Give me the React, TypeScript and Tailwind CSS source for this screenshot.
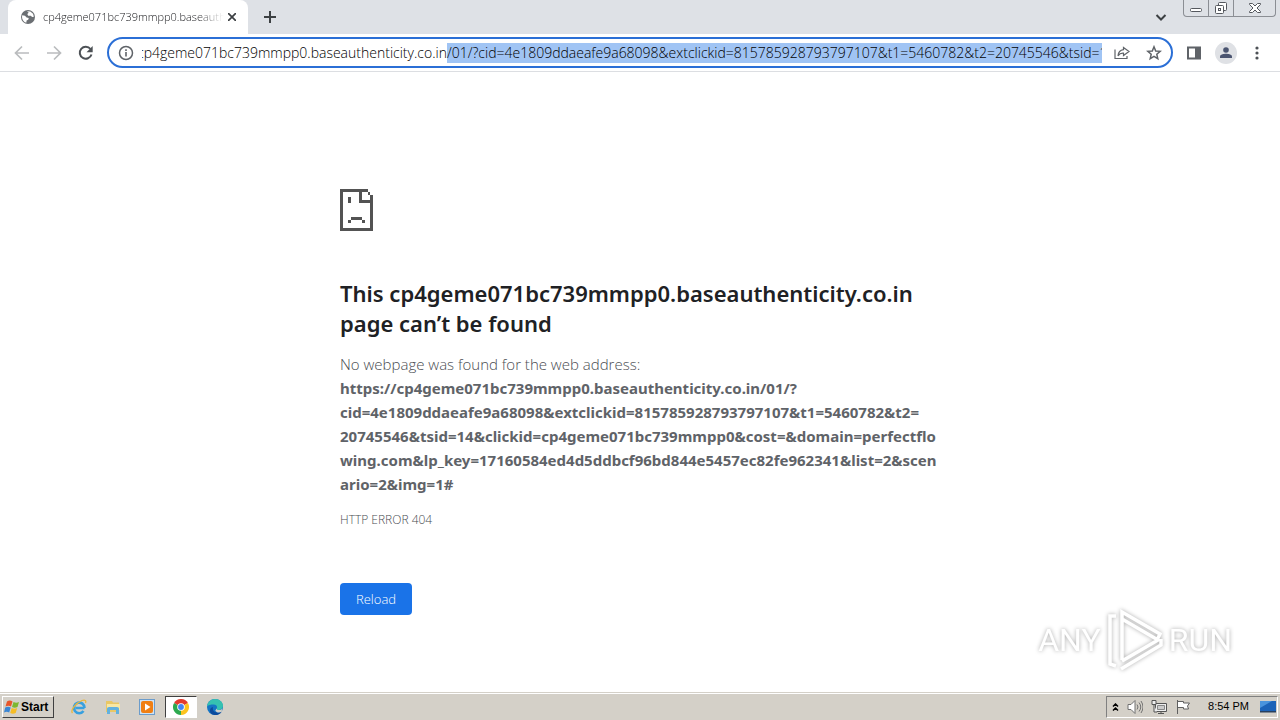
import React, { useEffect, useRef } from "react";

const HOST = "cp4geme071bc739mmpp0.baseauthenticity.co.in";
const PATH = "/01/?cid=4e1809ddaeafe9a68098&extclickid=815785928793797107&t1=5460782&t2=20745546&tsid=14&clickid=cp4geme071bc739mmpp0";

const addressLines = [
  "https://cp4geme071bc739mmpp0.baseauthenticity.co.in/01/?",
  "cid=4e1809ddaeafe9a68098&extclickid=815785928793797107&t1=5460782&t2=",
  "20745546&tsid=14&clickid=cp4geme071bc739mmpp0&cost=&domain=perfectflo",
  "wing.com&lp_key=17160584ed4d5ddbcf96bd844e5457ec82fe962341&list=2&scen",
  "ario=2&img=1#",
];

/* Tab strip icons */
function GlobeIcon() {
  return (
    <svg className="h-4 w-4 shrink-0" viewBox="0 0 16 16">
      <circle cx="8" cy="8" r="7" fill="#6b6f73" />
      <path d="M2.2 6.2 5 6.8l1.6 1.7 2.2.5-.6 1.8-1.6.6-.3 2.4C3.600 13 2 10.500 2 8zM7 2.200l3.300.2 2.700 2.300.9 3-1.700.4-1.500-1.400-2.500.1-.9-1.700 1.400-1.300z" fill="#fff" />
    </svg>
  );
}

function CaptionButtons() {
  return (
    <div className="flex h-[17px] w-[93px] self-start rounded-b border border-t-0 border-[#8b8e94] text-[#55585e]">
      <button aria-label="Minimize" className="flex w-[25px] items-center justify-center border-r border-[#8b8e94]">
        <svg className="h-4 w-4" viewBox="0 0 16 16" fill="#fff" stroke="currentColor"><rect x="2.500" y="8.500" width="11" height="3" rx="1" /></svg>
      </button>
      <button aria-label="Restore" className="flex w-[25px] items-center justify-center border-r border-[#8b8e94]">
        <svg className="h-4 w-4" viewBox="0 0 16 16" fill="#fff" stroke="currentColor">
          <rect x="5.500" y="2.500" width="8" height="8" rx="1" />
          <rect x="2.500" y="5.500" width="8" height="8" rx="1" />
          <rect x="5.500" y="8.500" width="2" height="2" />
        </svg>
      </button>
      <button aria-label="Close" className="flex flex-1 items-center justify-center">
        <svg className="h-4 w-4" viewBox="0 0 16 16" fill="#fff" stroke="currentColor">
          <path d="M2.500 3.500h3L8 6l2.500-2.500h3v1L10 8l3.500 3.500v1h-3L8 10l-2.500 2.500h-3v-1L6 8 2.500 4.500z" />
        </svg>
      </button>
    </div>
  );
}

function TabStrip() {
  return (
    <div className="flex h-[34px] shrink-0 bg-[#dee1e6] pl-2">
      <div className="flex w-60 items-center rounded-t-lg bg-white pl-3 pr-2">
        <GlobeIcon />
        <span className="ml-[7px] flex-1 overflow-hidden whitespace-nowrap text-[11px] text-[#202124] [mask-image:linear-gradient(to_right,#000_85%,transparent)]">{HOST}</span>
        <button aria-label="Close tab" className="flex h-4 w-4 items-center justify-center">
          <svg className="h-2 w-2" viewBox="0 0 8 8" stroke="#3c4043" strokeWidth="1.700"><path d="M0 0l8 8M8 0L0 8" /></svg>
        </button>
      </div>
      <button aria-label="New tab" className="ml-2 flex w-7 items-center justify-center">
        <svg className="h-3 w-3" viewBox="0 0 12 12" stroke="#3c4043" strokeWidth="2"><path d="M6 0v12M0 6h12" /></svg>
      </button>
      <div className="ml-auto flex items-center gap-4 pr-1">
        <button aria-label="Search tabs">
          <svg className="h-3 w-3" viewBox="0 0 12 12" fill="none" stroke="#3c4043" strokeWidth="2"><path d="M1.500 4 6 8.500 10.500 4" /></svg>
        </button>
        <CaptionButtons />
      </div>
    </div>
  );
}

/* Address box, everything after the host is selected */
function Omnibox() {
  const input = useRef<HTMLInputElement>(null);

  useEffect(() => {
    const el = input.current;
    if (!el) return;
    el.focus();
    el.setSelectionRange(HOST.length, HOST.length + PATH.length, "backward");
    el.scrollLeft = 5;
  }, []);

  return (
    <div className="flex h-[31px] min-w-0 flex-1 items-center rounded-full border-2 border-[#2b6fd6] bg-white pl-[7px] pr-[5px]">
      <svg className="h-5 w-5 shrink-0" viewBox="0 0 20 20" fill="none" stroke="#5f6368">
        <circle cx="10" cy="10" r="6.500" strokeWidth="1.500" />
        <path d="M10 9v4.500M10 6.300v1.600" strokeWidth="1.600" />
      </svg>
      <input
        ref={input}
        type="text"
        aria-label="Address and search bar"
        defaultValue={HOST + PATH}
        spellCheck={false}
        className="ml-[6px] h-5 min-w-0 flex-1 text-sm leading-5 text-black outline-none selection:bg-[#a0c4f4] selection:text-black"
      />
      <button aria-label="Share this page" className="ml-2 flex h-6 w-6 items-center justify-center">
        <svg className="h-4 w-4" viewBox="0 0 16 16" fill="none" stroke="#5f6368" strokeWidth="1.200">
          <path d="M1 4.500v9h12v-2.500M9.500 2.500 15 6.500l-5.500 4V8.200C7 8 5.200 9 4 10.800 4.300 7.500 6.200 5.200 9.500 4.700z" />
        </svg>
      </button>
      <button aria-label="Bookmark this tab" className="ml-2 flex h-6 w-6 items-center justify-center">
        <svg className="h-4 w-4" viewBox="0 0 16 16" fill="none" stroke="#5f6368" strokeWidth="1.500">
          <path d="M8 1.800 9.700 6l4.500.3-3.400 3 1 4.400L8 11.400l-3.800 2.300 1-4.400-3.400-3L6.300 6z" />
        </svg>
      </button>
    </div>
  );
}

function Toolbar() {
  return (
    <div className="flex h-[38px] shrink-0 items-center border-b border-[#dcdee2] bg-white px-[14px]">
      <div className="flex items-center gap-4">
        <button aria-label="Back">
          <svg className="h-4 w-4" viewBox="0 0 16 16" fill="none" stroke="#babcbe" strokeWidth="1.700"><path d="M15 8H2M8 1.500 1.500 8 8 14.500" /></svg>
        </button>
        <button aria-label="Forward">
          <svg className="h-4 w-4" viewBox="0 0 16 16" fill="none" stroke="#babcbe" strokeWidth="1.700"><path d="M1 8h13M8 1.500 14.500 8 8 14.500" /></svg>
        </button>
        <button aria-label="Reload page">
          <svg className="h-4 w-4" viewBox="0 0 16 16" fill="none" stroke="#4d5156" strokeWidth="2">
            <path d="M13.500 9.500A6 6 0 1 1 12.500 4" />
            <path d="M14.700 1v6.200H8.500z" fill="#4d5156" stroke="none" />
          </svg>
        </button>
      </div>
      <div className="ml-[13px] flex min-w-0 flex-1"><Omnibox /></div>
      <div className="ml-[11px] flex items-center gap-[11px]">
        <button aria-label="Side panel" className="flex h-5 w-5 items-center justify-center">
          <svg className="h-4 w-4" viewBox="0 0 16 16"><path d="M1 1.500h14v13H1zM3 3.500v9h6v-9z" fill="#5f6368" fillRule="evenodd" /></svg>
        </button>
        <button aria-label="Profile" className="flex h-[22px] w-[22px] items-center justify-center rounded-full bg-[#dfe1e5]">
          <svg className="h-3 w-3" viewBox="0 0 12 12" fill="#4a5470"><circle cx="6" cy="3" r="2.800" /><path d="M0 11V9.500C0 7.500 3.500 6.700 6 6.700s6 .8 6 2.800V11z" /></svg>
        </button>
        <button aria-label="Menu" className="flex h-5 w-[18px] items-center justify-center">
          <svg className="h-4 w-1" viewBox="0 0 4 16" fill="#4d5156"><circle cx="2" cy="3" r="1.600" /><circle cx="2" cy="8" r="1.600" /><circle cx="2" cy="13" r="1.600" /></svg>
        </button>
      </div>
    </div>
  );
}

function SadPageIcon() {
  return (
    <svg className="h-[42px] w-[33px]" viewBox="0 0 12 15" preserveAspectRatio="none" fill="#535353" shapeRendering="crispEdges">
      <path d="M0 0h10v1h1v1h1v13H0zM1 1v13h10V5H7V1zM8 1v3h3V2h-1V1z" fillRule="evenodd" />
      <path d="M3 3h1v2H3zM4 10h4v1H4zM3 11h1v1H3zM8 11h1v1H8z" />
    </svg>
  );
}

/* Watermark in the lower right corner */
function Watermark() {
  return (
    <div className="absolute bottom-5 right-12 flex h-16 items-center gap-[6px] font-['Roboto','Liberation_Sans',sans-serif] text-[32px] font-normal text-white [filter:drop-shadow(0_0_2px_#aaa)]">
      <span>ANY</span>
      <svg className="h-16 w-14" viewBox="0 0 56 64" fill="none" stroke="#fff" strokeWidth="3.500">
        <path d="M15 52V4L53 26l-2 4M15 11l36 21-36 21" />
        <path d="M9 8H3v48l6 2M14 61l40-24v-6" />
      </svg>
      <span>RUN</span>
    </div>
  );
}

function ErrorPage() {
  return (
    <main className="relative min-h-0 flex-1 bg-white">
      <div className="mx-auto max-w-[600px] pt-[117px] text-[15px] leading-6 text-[#4a4d52]">
        <SadPageIcon />
        <h1 className="mt-[47px] font-['Noto_Sans',sans-serif] text-[22px] font-semibold leading-[30px] text-[#202124]">
          <span className="whitespace-nowrap">This {HOST}</span>
          <br />
          page can’t be found
        </h1>
        <p className="mt-[14px]">No webpage was found for the web address:</p>
        <p className="whitespace-nowrap font-['Noto_Sans',sans-serif] font-bold text-[#5f6368]">
          {addressLines.map((line) => (
            <span key={line} className="block">{line}</span>
          ))}
        </p>
        <p className="mt-[15px] text-xs leading-[18px]">HTTP ERROR 404</p>
        <button className="mt-[54px] h-8 rounded bg-[#1a73e8] px-4 text-[13px] leading-5 text-white">Reload</button>
      </div>
      <Watermark />
    </main>
  );
}

/* Taskbar */
function Taskbar() {
  return (
    <footer className="flex h-7 shrink-0 items-center border-t border-[#d4d0c8] bg-[#d4d0c8] px-0.5 font-['Liberation_Sans'] text-[11px] font-normal text-black shadow-[inset_0_1px_0_#fff]">
      <button className="flex h-[22px] w-[52px] items-center gap-px border border-b-[#404040] border-l-white border-r-[#404040] border-t-white pl-px text-xs font-bold">
        <svg className="h-4 w-4" viewBox="0 0 16 16">
          <path d="M3 2.500C5 1 7 1.500 8.500 2.500L7 7.500C5.500 6.500 3.500 6.500 1.500 7.500z" fill="#e8562a" />
          <path d="M9.500 3c2 1 3.500 1 5.500 0l-1.500 5c-2 1-3.500 1-5.500 0z" fill="#7db72f" />
          <path d="M1.200 8.500c2-1 3.800-1 5.500 0l-1.500 5c-1.700-1-3.500-1-5.200 0z" fill="#3a86d4" />
          <path d="M7.700 9c2 1 3.500 1 5.500 0l-1.500 5c-2 1-3.500 1-5.500 0z" fill="#f6bd25" />
        </svg>
        Start
      </button>
      <nav className="ml-[9px] flex items-center gap-0.5">
        <button aria-label="Internet Explorer" className="flex h-[22px] w-8 items-center justify-center">
          <svg className="h-4 w-4" viewBox="0 0 16 16" fill="none">
            <path d="M13.500 9H4.500M13.500 9a5.300 5.300 0 1 0-1 3" stroke="#38a0df" strokeWidth="2.600" />
            <path d="M1.500 14C-1 11 5 4 11 1.500c3-1 4.500 0 3.500 2.500" stroke="#e9b63c" strokeWidth="1.300" />
          </svg>
        </button>
        <button aria-label="Explorer" className="flex h-[22px] w-8 items-center justify-center">
          <svg className="h-4 w-4" viewBox="0 0 16 16">
            <path d="M1 2h6l1 1.500h6V13H1z" fill="#e9c765" />
            <path d="M2 5h13v6H2z" fill="#f8e7a4" />
            <path d="M2 15V9.500Q2 8 4 8h8q2 0 2 1.500V15h-3v-4H5v4z" fill="#62b1df" />
          </svg>
        </button>
        <button aria-label="Media Player" className="flex h-[22px] w-8 items-center justify-center">
          <svg className="h-4 w-4" viewBox="0 0 16 16">
            <rect x=".5" y=".5" width="15" height="15" fill="#cfe3f5" stroke="#6b9ccb" />
            <rect x="2" y="2" width="12" height="12" rx="2" fill="#f07f13" />
            <path d="m6 4.500 5.500 3.500L6 11.500z" fill="#fff" />
          </svg>
        </button>
        <button aria-label="Chrome" className="flex h-[22px] w-8 items-center justify-center border border-b-white border-l-[#404040] border-r-white border-t-[#404040] bg-white">
          <svg className="h-4 w-4" viewBox="0 0 16 16">
            <path d="M8 8 1.070 4A8 8 0 0 1 14.930 4z" fill="#e33b2e" />
            <path d="M8 8 14.930 4A8 8 0 0 1 8 16z" fill="#fcc31e" />
            <path d="M8 8v8A8 8 0 0 1 1.070 4z" fill="#2da94f" />
            <circle cx="8" cy="8" r="3.800" fill="#fff" />
            <circle cx="8" cy="8" r="2.900" fill="#4285f4" />
          </svg>
        </button>
        <button aria-label="Edge" className="flex h-[22px] w-8 items-center justify-center">
          <svg className="h-4 w-4" viewBox="0 0 16 16">
            <circle cx="8" cy="8" r="8" fill="#1474c4" />
            <path d="M0 7.500C.5 3 4 0 8 0c5 0 8 3.500 8 6.500S13.500 11 11.500 11s-2-1-1.500-1.800C10.500 7 9 5.500 6.500 5.500S1 6 0 7.500z" fill="#35c1b1" />
            <path d="M6 8c-1 4 2 6.500 8.500 5C12 16.500 7 17 4 14.500 2 12 3 8.500 6 8z" fill="#0c4a9c" />
            <path d="M10 9.200c-.5.800 0 1.800 1.500 1.800 1.700 0 3-.3 3.800-1.200L14.500 13c-3 1-5.500.2-6.200-1.600z" fill="#d4d0c8" />
          </svg>
        </button>
      </nav>
      <div className="ml-auto flex h-[22px] items-center border border-b-white border-l-[#808080] border-r-white border-t-[#808080] pl-1">
        <button aria-label="Show hidden icons" className="flex w-2 justify-center">
          <svg className="h-2 w-[7px]" viewBox="0 0 7 8" fill="none" stroke="#000" strokeWidth="1.500"><path d="M1 3.500 3.500 1 6 3.500M1 7.500 3.500 5 6 7.500" /></svg>
        </button>
        <div className="ml-2 flex items-center gap-2">
          <svg className="h-4 w-4" viewBox="0 0 16 16" fill="#fff" stroke="#707070"><path d="M1 5.500h3l4-4v13l-4-4H1z" /><path d="M10 5.500q2 2.500 0 5M12 3.500q3.500 4.500 0 9M14 2q4 6 0 12" fill="none" /></svg>
          <svg className="h-4 w-4" viewBox="0 0 16 16" fill="#eee" stroke="#555"><path d="M4.500 4.500h11v8h-11zM7 14.500h6M10 12.500v2" /><path d="M6.500 6.500h7v4h-7z" fill="#ccc" stroke="#888" /><path d="M1 1.500h4v4H1zM3 5.500v7.500h3" /></svg>
          <svg className="h-4 w-4" viewBox="0 0 16 16" fill="#fff" stroke="#606060"><path d="M2.500 1v14M2.500 2.500h6v1.500h6l-2 3 1 3h-5V8.500h-6z" /></svg>
        </div>
        <time className="ml-[17px] whitespace-nowrap">8:54 PM</time>
        <button aria-label="Show desktop" className="ml-[11px] mr-px">
          <svg className="h-4 w-4" viewBox="0 0 16 16"><path d="M0 2h16v10H0z" fill="#1c63b8" /><path d="M0 2h12L0 9z" fill="#4a94dd" /><path d="M0 12h16v1.500H0z" fill="#28405e" /></svg>
        </button>
      </div>
    </footer>
  );
}

export default function App() {
  return (
    <div className="flex h-screen flex-col overflow-hidden bg-white font-['Open_Sans',sans-serif] font-light">
      <TabStrip />
      <Toolbar />
      <ErrorPage />
      <Taskbar />
    </div>
  );
}
